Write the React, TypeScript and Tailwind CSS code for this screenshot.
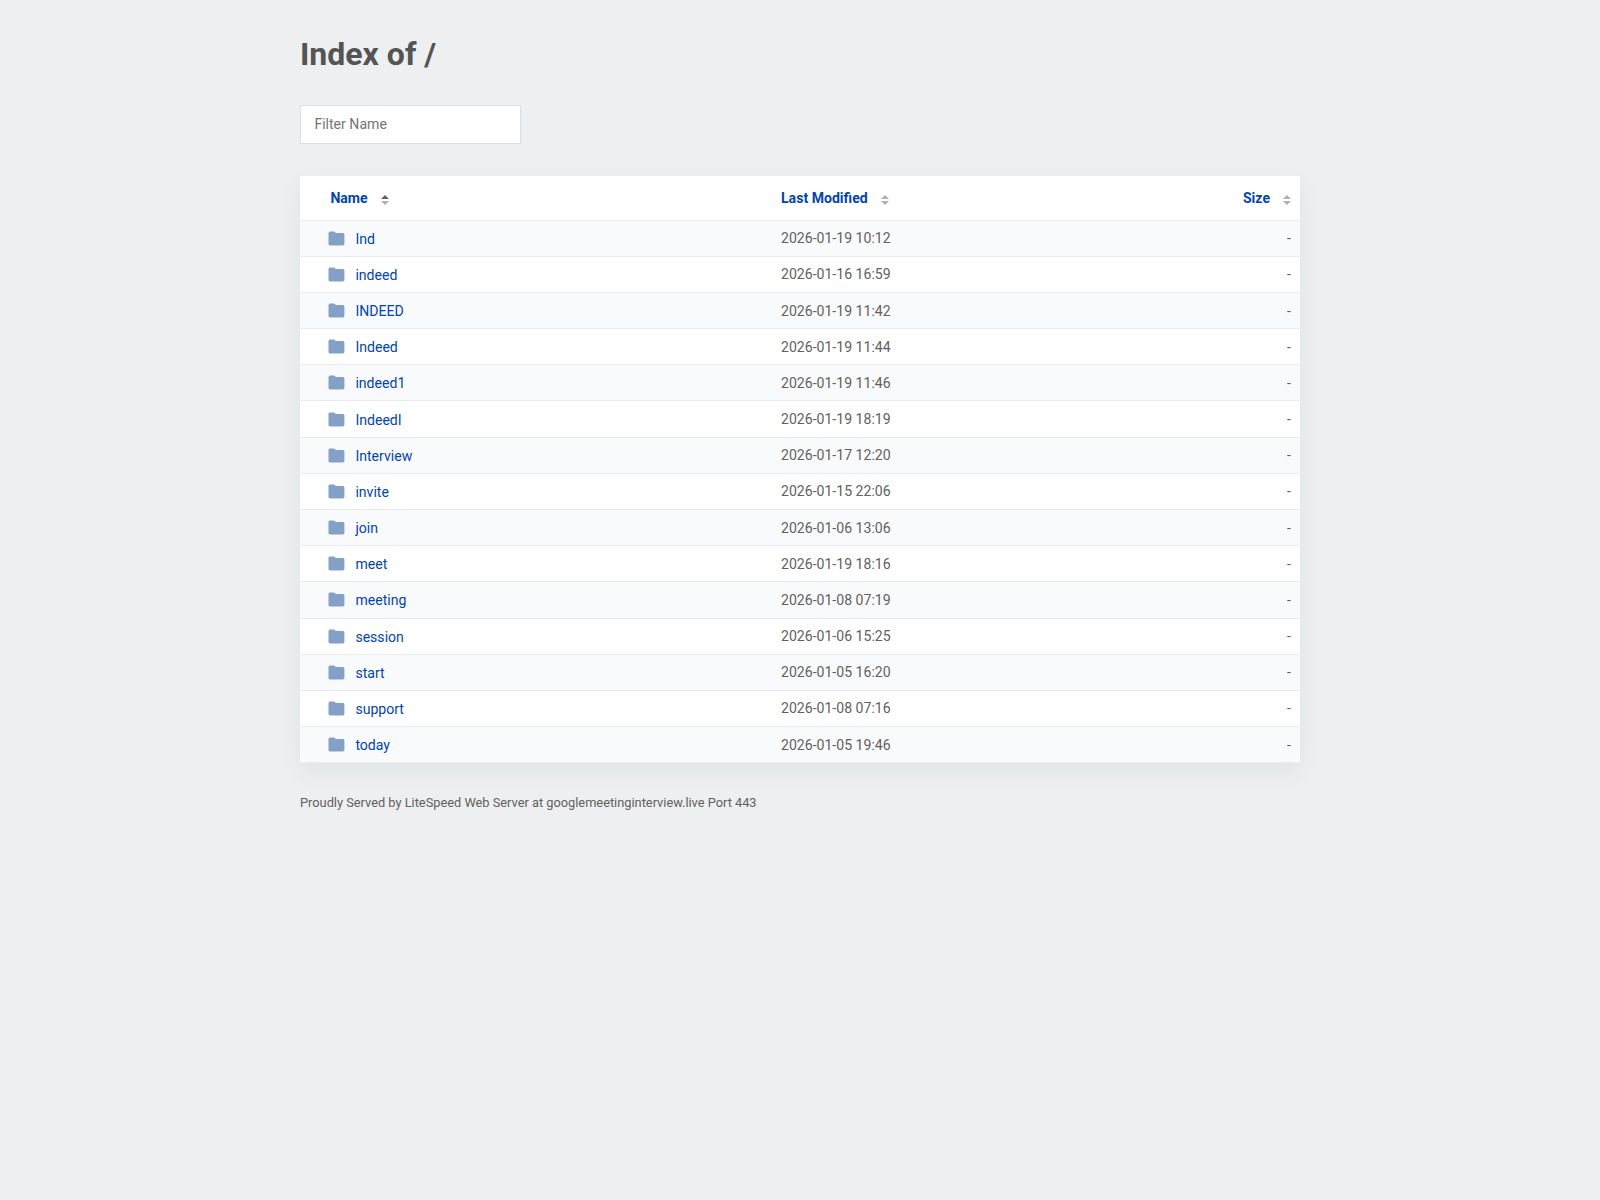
import { useState } from "react";

type Entry = { name: string; modified: string };

const entries: Entry[] = [
  { name: "Ind", modified: "2026-01-19 10:12" },
  { name: "indeed", modified: "2026-01-16 16:59" },
  { name: "INDEED", modified: "2026-01-19 11:42" },
  { name: "Indeed", modified: "2026-01-19 11:44" },
  { name: "indeed1", modified: "2026-01-19 11:46" },
  { name: "IndeedI", modified: "2026-01-19 18:19" },
  { name: "Interview", modified: "2026-01-17 12:20" },
  { name: "invite", modified: "2026-01-15 22:06" },
  { name: "join", modified: "2026-01-06 13:06" },
  { name: "meet", modified: "2026-01-19 18:16" },
  { name: "meeting", modified: "2026-01-08 07:19" },
  { name: "session", modified: "2026-01-06 15:25" },
  { name: "start", modified: "2026-01-05 16:20" },
  { name: "support", modified: "2026-01-08 07:16" },
  { name: "today", modified: "2026-01-05 19:46" },
];

function SortIcon({ active = false }: { active?: boolean }) {
  return (
    <svg width="8" height="10" viewBox="0 0 8 10" className="mt-1 shrink-0">
      <path d="M0 4 4 0l4 4z" fill={active ? "#616161" : "#b0b0b0"} />
      <path d="M0 6h8l-4 4z" fill="#b0b0b0" />
    </svg>
  );
}

function FolderIcon() {
  return (
    <svg width="17" height="15" viewBox="0 0 17 15" className="-mt-px shrink-0">
      <path
        d="M2.1.4h3.6c.5 0 .9.2 1.2.6l.8 1.1h7c.9 0 1.7.7 1.7 1.6v9.1c0 .9-.8 1.6-1.7 1.6H2.1c-.9 0-1.6-.7-1.6-1.6V2C.5 1.1 1.2.4 2.1.4z"
        fill="#85a0c7"
      />
    </svg>
  );
}

export default function App() {
  const [filter, setFilter] = useState("");
  const visible = entries.filter((e) => e.name.toLowerCase().includes(filter.toLowerCase()));

  return (
    <div className="min-h-screen bg-[#edeff0] pt-[30px] font-['Roboto',sans-serif] text-[14.08px] leading-5 text-[#616161]">
      <main className="mx-auto w-[1000px]">
        <h1 className="text-[32px] leading-[48px] font-bold text-[#545454]">Index of /</h1>
        <input
          type="text"
          value={filter}
          onChange={(e) => setFilter(e.target.value)}
          placeholder="Filter Name"
          className="mt-[27px] block h-[39px] w-[221px] border border-[#dcdee0] bg-white px-[13.4px] pb-0.5 text-[14.08px] outline-none placeholder:text-[#757575]"
        />

        <div className="mt-8 bg-white shadow-[0_8px_24px_rgba(0,55,48,0.06)]">
          <div className="grid h-[44.625px] grid-cols-[481px_1fr_120px] items-center border-b border-[#e9ebed] font-bold text-[#0245ac]">
            <a href="#" className="flex items-center gap-[13.2px] pl-[30.4px]">
              Name <SortIcon active />
            </a>
            <a href="#" className="flex items-center gap-[13.5px]">
              Last Modified <SortIcon />
            </a>
            <a href="#" className="flex items-center justify-end gap-[13px] pr-[9px]">
              Size <SortIcon />
            </a>
          </div>
          {visible.map((entry) => (
            <div
              key={entry.name}
              className="grid h-[36.172px] grid-cols-[481px_1fr_120px] items-center border-b border-[#e9ebed] odd:bg-white even:bg-[#f9fafc]"
            >
              <a href="#" className="flex items-center gap-[10.2px] pt-px pl-[28.2px] text-[#0245ac]">
                <FolderIcon />
                {entry.name}
              </a>
              <span>{entry.modified}</span>
              <span className="pr-[9px] text-right">-</span>
            </div>
          ))}
        </div>

        <footer className="mt-[30px] text-[12.8px] leading-5">
          Proudly Served by LiteSpeed Web Server at googlemeetinginterview.live Port 443
        </footer>
      </main>
    </div>
  );
}
